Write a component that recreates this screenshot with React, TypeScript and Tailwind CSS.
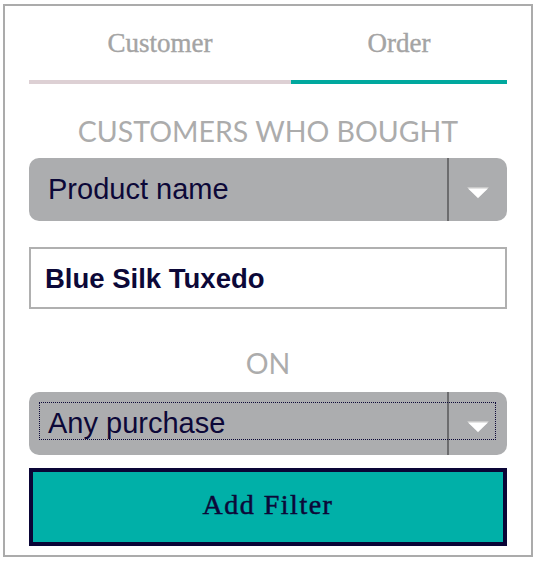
import { useState } from "react";

const serif = "font-['Liberation_Serif',serif]";
const sans = "font-['Liberation_Sans',Arial,sans-serif]";
const label = "font-['Lato',sans-serif] text-[28.5px] leading-[29px] h-[29px] text-[#acacac] text-center uppercase";

function Arrow() {
  return (
    <svg width="22" height="12" viewBox="0 0 22 12">
      <polygon points="0,0 22,0 11,11.5" fill="#c9c9c9" />
      <polygon points="1,1.5 21,1.5 11,11" fill="#ffffff" />
    </svg>
  );
}

function FakeSelect({ value, focused }: { value: string; focused?: boolean }) {
  return (
    <div className="relative flex h-[63px] rounded-[10px] bg-[#acadaf]">
      <div className={`flex flex-1 items-center pl-[19px] text-[29px] leading-none text-[#0c0838] ${sans}`}>
        {value}
      </div>
      <div className="flex w-[60px] items-center justify-center border-l-2 border-[#6c6c6e] pt-[6px]">
        <Arrow />
      </div>
      {focused && (
        <div className="pointer-events-none absolute top-[10px] right-[11px] bottom-[15px] left-[10px] border border-dotted border-[#0c0838]" />
      )}
    </div>
  );
}

export default function App() {
  const [tab, setTab] = useState("order");

  return (
    <div className="h-[562px] w-[536px] bg-white pt-[4px] pl-[3px]">
      <div className="flex h-[553px] w-[530px] flex-col border-2 border-[#ababab] bg-white px-[24px]">
        {/* tabs */}
        <div className="flex">
          <button
            onClick={() => setTab("customer")}
            className={`flex w-[262px] flex-col ${serif}`}
          >
            <span className="flex h-[74px] items-center justify-center text-[27px] leading-none text-[#a4a4a4] [-webkit-text-stroke:0.4px_#a4a4a4]">
              Customer
            </span>
            <span className={`h-1 w-full ${tab === "customer" ? "bg-[#00a89e]" : "bg-[#ddd0d4]"}`} />
          </button>
          <button
            onClick={() => setTab("order")}
            className={`flex flex-1 flex-col ${serif}`}
          >
            <span className="flex h-[74px] items-center justify-center text-[27px] leading-none text-[#a4a4a4] [-webkit-text-stroke:0.4px_#a4a4a4]">
              Order
            </span>
            <span className={`h-1 w-full ${tab === "order" ? "bg-[#00a89e]" : "bg-[#ddd0d4]"}`} />
          </button>
        </div>

        <div className={`mt-[33px] ${label}`}>Customers who bought</div>

        <div className="mt-[12px]">
          <FakeSelect value="Product name" />
        </div>

        <div className="mt-[26px] flex h-[62px] items-center border-2 border-[#b0b0b0] pt-[2px] pl-[14px]">
          <span className={`text-[27.5px] leading-none font-bold text-[#0c0838] ${sans}`}>
            Blue Silk Tuxedo
          </span>
        </div>

        <div className={`mt-[40px] ${label}`}>On</div>

        <div className="mt-[14px]">
          <FakeSelect value="Any purchase" focused />
        </div>

        <button
          className={`mt-[13px] flex h-[78px] items-center justify-center border-4 border-[#0a0536] bg-[#00b0a8] pb-[4px] text-[28px] leading-none tracking-[1.5px] text-[#0c0838] [-webkit-text-stroke:0.5px_#0c0838] ${serif}`}
        >
          Add Filter
        </button>
      </div>
    </div>
  );
}
